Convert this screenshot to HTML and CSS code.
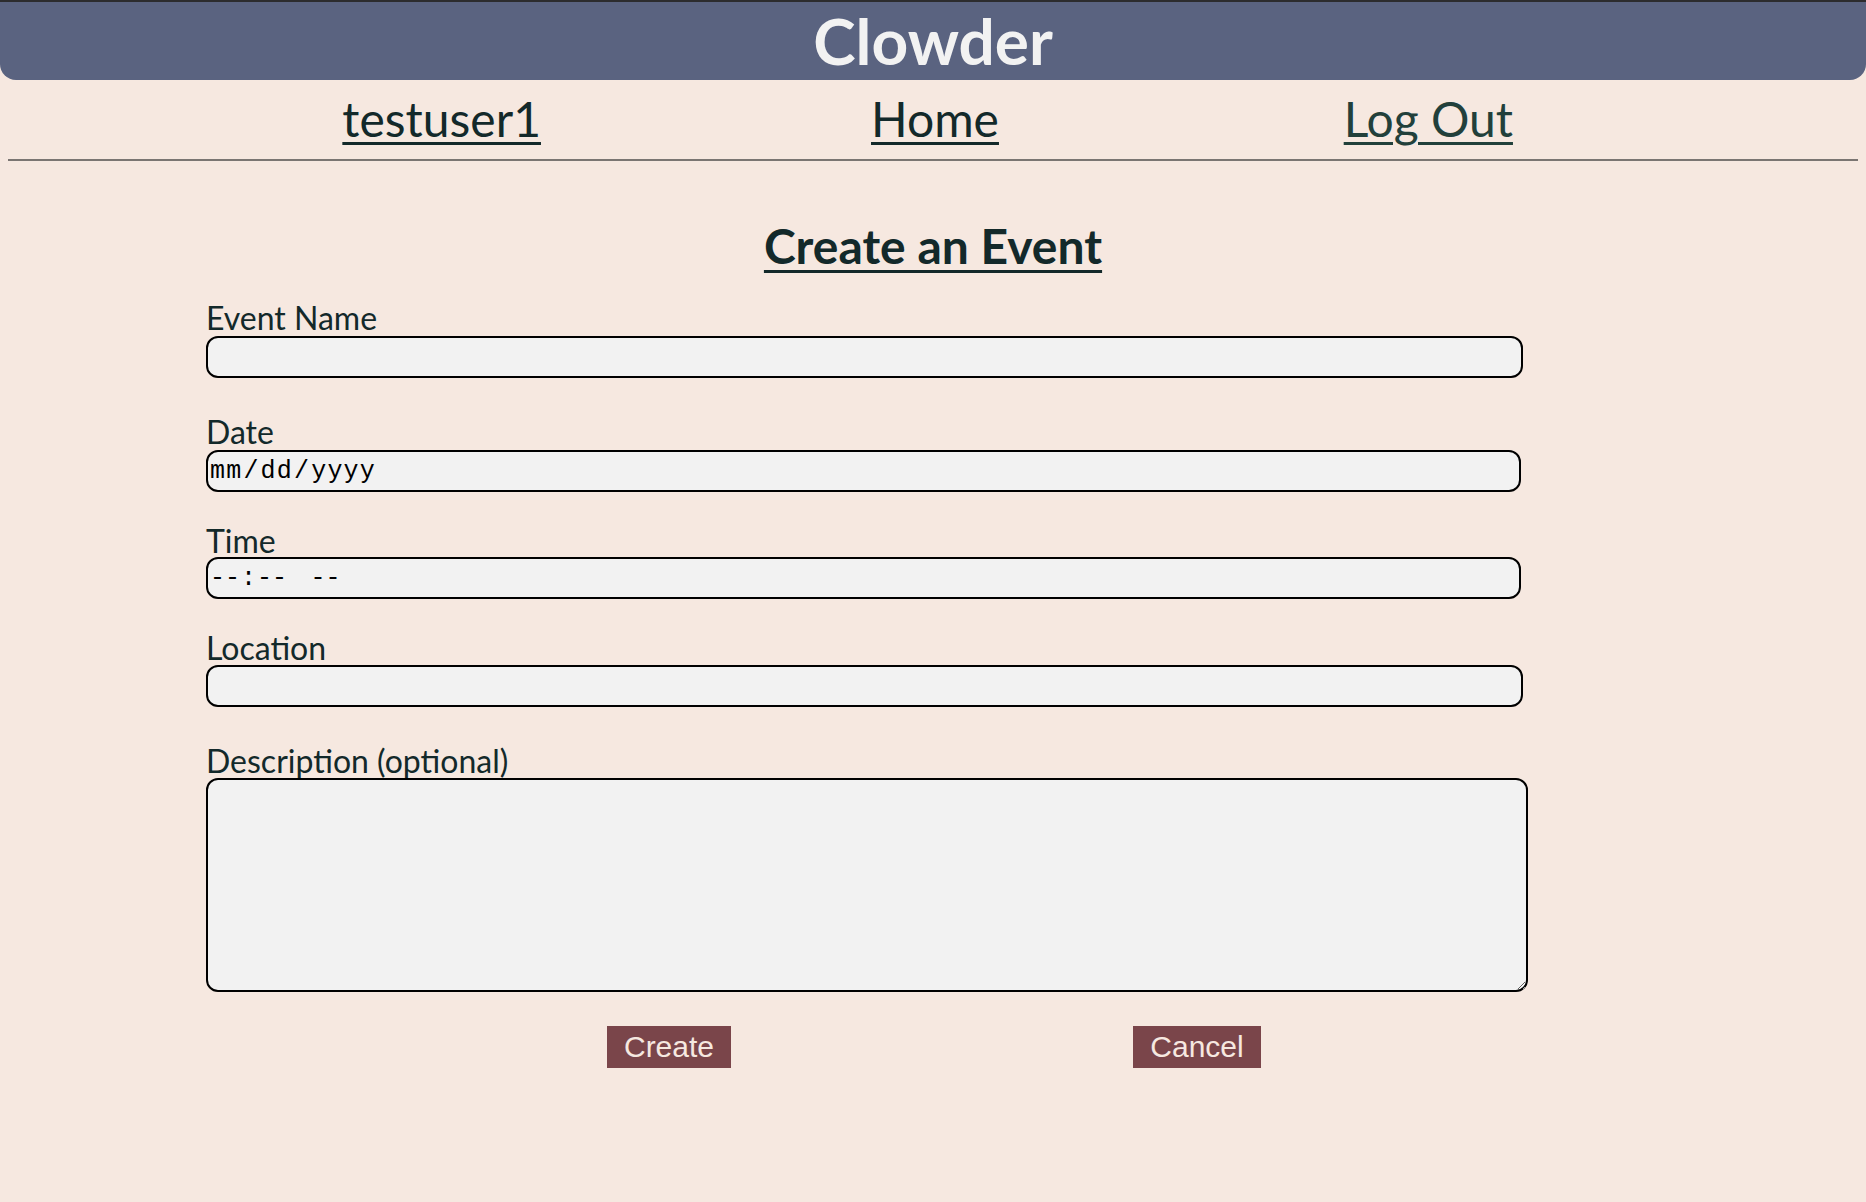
FILE: index.html
```html
<!DOCTYPE html>
<html lang="en">
<head>
<meta charset="utf-8">
<title>Clowder - Create an Event</title>
<link rel="stylesheet" href="styles.css">
</head>
<body>
<div class="topline"></div>
<header class="banner">Clowder</header>
<nav class="nav">
  <a href="#" class="nav-link">testuser1</a>
  <a href="#" class="nav-link">Home</a>
  <a href="#" class="nav-link visited">Log Out</a>
</nav>
<hr class="rule">
<main class="content">
  <h1 class="title">Create an Event</h1>
  <form class="form">
    <div class="field gap-lg">
      <label class="label" for="name">Event Name</label>
      <input class="box box-text" id="name" type="text">
    </div>
    <div class="field gap-sm">
      <label class="label" for="date">Date</label>
      <input class="box box-date" id="date" type="date">
    </div>
    <div class="field gap-sm">
      <label class="label label-tight" for="time">Time</label>
      <input class="box box-date box-time" id="time" type="time">
    </div>
    <div class="field gap-lg">
      <label class="label label-mid" for="loc">Location</label>
      <input class="box box-text" id="loc" type="text">
    </div>
    <div class="field gap-btn">
      <label class="label label-mid" for="desc">Description (optional)</label>
      <textarea class="box box-area" id="desc"></textarea>
    </div>
    <div class="actions">
      <div class="action-cell"><button type="submit" class="btn">Create</button></div>
      <div class="action-cell"><button type="button" class="btn">Cancel</button></div>
    </div>
  </form>
</main>
</body>
</html>
```
FILE: styles.css
```css
html, body {
  margin: 0;
  padding: 0;
}
body {
  background: #f6e8e0;
  font-family: Lato, "Noto Sans", sans-serif;
  color: #13292a;
  min-height: 1202px;
}
.topline {
  height: 2px;
  background: #2c2c2e;
}
.banner {
  height: 78px;
  line-height: 78px;
  background: #5a6380;
  border-radius: 0 0 16px 16px;
  color: #f2f2f2;
  text-align: center;
  font-size: 64px;
  font-weight: 700;
}
.nav {
  width: 1480px;
  margin: 10px auto 0;
  padding-left: 4px;
  display: grid;
  grid-template-columns: repeat(3, 1fr);
  justify-items: center;
  font-size: 48px;
  line-height: 57.6px;
}
.nav-link {
  color: #13292a;
  text-decoration: underline;
  text-decoration-thickness: 3px;
  text-underline-offset: 5px;
}
.nav-link.visited {
  color: #22403b;
}
.rule {
  margin: 11px 8px 0;
  height: 0;
  border: 0;
  border-top: 2px solid #7a7572;
}
.content {
  padding: 0 0 40px;
}
.title {
  margin: 56px 0 0;
  text-align: center;
  font-size: 48px;
  font-weight: 700;
  line-height: 57.6px;
  text-decoration: underline;
  text-decoration-thickness: 3px;
  text-underline-offset: 6px;
}
.form {
  margin: 26px 0 0;
  padding-left: 206px;
}
.field {
  display: flex;
  flex-direction: column;
  align-items: flex-start;
}
.gap-lg { margin-bottom: 36px; }
.gap-sm { margin-bottom: 31px; }
.gap-btn { margin-bottom: 34px; }
.label {
  font-size: 32px;
  line-height: 31px;
  padding-top: 2px;
  margin-bottom: 3px;
}
.label-tight { margin-bottom: 1px; }
.label-mid { margin-bottom: 2px; }
.box {
  box-sizing: border-box;
  margin: 0;
  border: 2px solid #000;
  border-radius: 12px;
  background: #f2f2f2;
  height: 42px;
  padding: 0 1px;
  outline: none;
}
.box-text {
  width: 1317px;
  font-family: Lato, sans-serif;
  font-size: 22px;
}
.box-date {
  width: 1315px;
  font-family: "Liberation Mono", "Courier New", monospace;
  font-size: 25px;
  letter-spacing: 1.2px;
  color: #000;
}
.box-time {
  letter-spacing: 3px;
}
.box-time::-webkit-datetime-edit-ampm-field {
  margin-left: 14px;
}
.box-date::-webkit-calendar-picker-indicator {
  display: none;
}
.box-area {
  width: 1322px;
  height: 214px;
  resize: both;
  font-family: Lato, sans-serif;
  font-size: 22px;
}
.actions {
  width: 1056px;
  margin-left: 199px;
  display: grid;
  grid-template-columns: 1fr 1fr;
  justify-items: center;
}
.btn {
  height: 42px;
  padding: 0 17px;
  border: 0;
  border-radius: 0;
  background: #7a454a;
  color: #f6e8e0;
  font-family: "Liberation Sans", Arial, sans-serif;
  font-size: 30px;
  line-height: 42px;
}
```
